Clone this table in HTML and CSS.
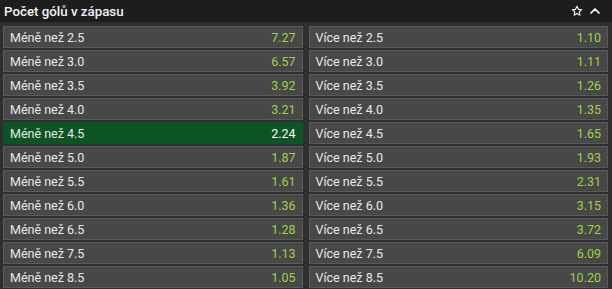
FILE: index.html
```html
<!DOCTYPE html>
<html lang="cs">
<head>
<meta charset="utf-8">
<link rel="stylesheet" href="styles.css">
</head>
<body>
<div class="market">
  <div class="header">
    <span class="title">Počet gólů v zápasu</span>
    <span class="icons">
      <svg class="icon" width="12" height="12" viewBox="0 0 24 24"><path d="M12 2.5l2.9 6.2 6.6.7-5 4.5 1.4 6.6L12 17.2l-5.9 3.3 1.4-6.6-5-4.5 6.6-.7z" fill="none" stroke="#fff" stroke-width="2.2" stroke-linejoin="round"/></svg>
      <svg class="icon" width="12" height="12" viewBox="0 0 24 24"><path d="M4 16l8-8 8 8" fill="none" stroke="#fff" stroke-width="3.4" stroke-linecap="round" stroke-linejoin="round"/></svg>
    </span>
  </div>
  <div class="grid">
    <div class="cell"><span>Méně než 2.5</span><span class="odd">7.27</span></div>
    <div class="cell"><span>Více než 2.5</span><span class="odd">1.10</span></div>
    <div class="cell"><span>Méně než 3.0</span><span class="odd">6.57</span></div>
    <div class="cell"><span>Více než 3.0</span><span class="odd">1.11</span></div>
    <div class="cell"><span>Méně než 3.5</span><span class="odd">3.92</span></div>
    <div class="cell"><span>Více než 3.5</span><span class="odd">1.26</span></div>
    <div class="cell"><span>Méně než 4.0</span><span class="odd">3.21</span></div>
    <div class="cell"><span>Více než 4.0</span><span class="odd">1.35</span></div>
    <div class="cell selected"><span>Méně než 4.5</span><span class="odd">2.24</span></div>
    <div class="cell"><span>Více než 4.5</span><span class="odd">1.65</span></div>
    <div class="cell"><span>Méně než 5.0</span><span class="odd">1.87</span></div>
    <div class="cell"><span>Více než 5.0</span><span class="odd">1.93</span></div>
    <div class="cell"><span>Méně než 5.5</span><span class="odd">1.61</span></div>
    <div class="cell"><span>Více než 5.5</span><span class="odd">2.31</span></div>
    <div class="cell"><span>Méně než 6.0</span><span class="odd">1.36</span></div>
    <div class="cell"><span>Více než 6.0</span><span class="odd">3.15</span></div>
    <div class="cell"><span>Méně než 6.5</span><span class="odd">1.28</span></div>
    <div class="cell"><span>Více než 6.5</span><span class="odd">3.72</span></div>
    <div class="cell"><span>Méně než 7.5</span><span class="odd">1.13</span></div>
    <div class="cell"><span>Více než 7.5</span><span class="odd">6.09</span></div>
    <div class="cell"><span>Méně než 8.5</span><span class="odd">1.05</span></div>
    <div class="cell"><span>Více než 8.5</span><span class="odd">10.20</span></div>
  </div>
</div>
</body>
</html>
```

FILE: styles.css
```css
html, body {
  margin: 0;
  padding: 0;
  background: #2f2f2f;
}
.market {
  font-family: Roboto, "Liberation Sans", sans-serif;
  font-size: 12.5px;
  color: #e8e8e8;
}
.header {
  height: 22px;
  background: #1d1d1d;
  display: flex;
  align-items: center;
  justify-content: space-between;
  padding: 0 11px 0 4px;
}
.title {
  font-weight: 500;
  color: #f2f2f2;
  font-size: 13.3px;
}
.icons {
  display: flex;
  gap: 6px;
  align-items: center;
}
.icon {
  display: block;
}
.grid {
  display: grid;
  grid-template-columns: 1fr 1fr;
  column-gap: 6px;
  row-gap: 2px;
  padding: 4px 4px 0 3px;
}
.cell {
  height: 22px;
  box-sizing: border-box;
  background: #484848;
  border: 1px solid #5a5a5a;
  display: flex;
  align-items: center;
  justify-content: space-between;
  padding: 0 6px 0 6px;
}
.odd {
  color: #9fd245;
}
.cell.selected {
  background: #0a5523;
  border-color: #0a5523;
}
.cell.selected .odd {
  color: #ffffff;
}
```
